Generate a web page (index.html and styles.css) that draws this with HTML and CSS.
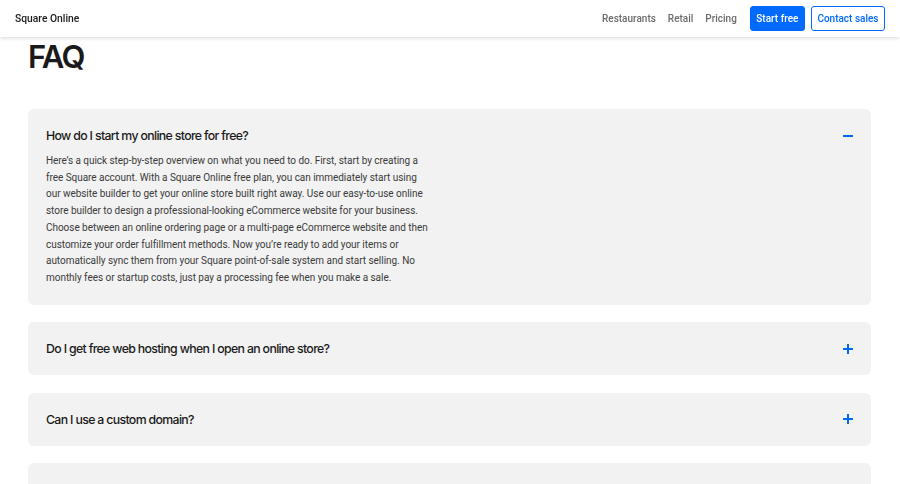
FILE: index.html
```html
<!DOCTYPE html>
<html lang="en">
<head>
<meta charset="utf-8">
<title>Square Online FAQ</title>
<link rel="stylesheet" href="styles.css">
</head>
<body>
<header class="topbar">
  <div class="brand">Square Online</div>
  <nav class="nav">
    <a class="nav-link" href="#">Restaurants</a>
    <a class="nav-link" href="#">Retail</a>
    <a class="nav-link" href="#">Pricing</a>
    <a class="btn btn-primary" href="#">Start free</a>
    <a class="btn btn-outline" href="#">Contact sales</a>
  </nav>
</header>
<main class="content">
  <h1 class="title">FAQ</h1>
  <div class="faq-list">
    <section class="faq open">
      <div class="faq-head">
        <h2 class="faq-q">How do I start my online store for free?</h2>
        <svg class="faq-icon" width="12" height="12" viewBox="0 0 12 12"><path d="M1 6h10" stroke="#006aff" stroke-width="2"/></svg>
      </div>
      <p class="faq-a">Here’s a quick step-by-step overview on what you need to do. First, start by creating a<br>free Square account. With a Square Online free plan, you can immediately start using<br>our website builder to get your online store built right away. Use our easy-to-use online<br>store builder to design a professional-looking eCommerce website for your business.<br>Choose between an online ordering page or a multi-page eCommerce website and then<br>customize your order fulfillment methods. Now you’re ready to add your items or<br>automatically sync them from your Square point-of-sale system and start selling. No<br>monthly fees or startup costs, just pay a processing fee when you make a sale.</p>
    </section>
    <section class="faq">
      <div class="faq-head">
        <h2 class="faq-q">Do I get free web hosting when I open an online store?</h2>
        <svg class="faq-icon" width="12" height="12" viewBox="0 0 12 12"><path d="M1 6h10M6 1v10" stroke="#006aff" stroke-width="2"/></svg>
      </div>
    </section>
    <section class="faq">
      <div class="faq-head">
        <h2 class="faq-q">Can I use a custom domain?</h2>
        <svg class="faq-icon" width="12" height="12" viewBox="0 0 12 12"><path d="M1 6h10M6 1v10" stroke="#006aff" stroke-width="2"/></svg>
      </div>
    </section>
    <section class="faq faded">
      <div class="faq-head">
        <h2 class="faq-q">Can I sell products online with a free online store?</h2>
        <svg class="faq-icon" width="12" height="12" viewBox="0 0 12 12"><path d="M1 6h10M6 1v10" stroke="#006aff" stroke-width="2"/></svg>
      </div>
    </section>
  </div>
</main>
</body>
</html>
```
FILE: styles.css
```css
* { box-sizing: border-box; }
html, body { margin: 0; padding: 0; }
body {
  background: #ffffff;
  font-family: Inter, "Noto Sans", "Liberation Sans", sans-serif;
  color: #1a1a1a;
  overflow: hidden;
}
.topbar {
  position: fixed;
  top: 0; left: 0; right: 0;
  height: 37px;
  background: #fff;
  box-shadow: 0 1px 4px rgba(0,0,0,0.16);
  display: flex;
  align-items: center;
  justify-content: space-between;
  padding: 0 15px 0 15px;
  z-index: 10;
}
.brand {
  font-family: Roboto, "Liberation Sans", sans-serif;
  font-size: 10.3px;
  font-weight: 500;
  color: #1a1a1a;
}
.nav {
  display: flex;
  align-items: center;
  font-family: Roboto, "Liberation Sans", sans-serif;
}
.nav-link {
  font-size: 10px;
  font-weight: 500;
  color: #6b6b6b;
  text-decoration: none;
  margin-right: 12px;
}
.btn {
  font-size: 10px;
  font-weight: 500;
  text-decoration: none;
  height: 25px;
  line-height: 23px;
  padding: 0 5.5px;
  border-radius: 3px;
  border: 1px solid #006aff;
}
.btn-primary {
  background: #006aff;
  color: #fff;
  margin-left: 1px;
  margin-right: 6px;
}
.btn-outline {
  background: #fff;
  color: #006aff;
}
.content {
  padding: 37px 29px 0 28px;
}
.title {
  margin: 0;
  font-size: 31px;
  font-weight: 600;
  letter-spacing: -1.6px;
  line-height: 40px;
  color: #1a1a1a;
}
.faq-list {
  margin-top: 32px;
  display: flex;
  flex-direction: column;
  gap: 17.5px;
}
.faq {
  background: #f2f2f2;
  border-radius: 6px;
  padding: 18px 17px 18px 18px;
}
.faq-head {
  display: flex;
  align-items: center;
  justify-content: space-between;
  height: 17px;
}
.faq-q {
  margin: 0;
  font-size: 12.3px;
  font-weight: 500;
  letter-spacing: -0.65px;
  color: #1a1a1a;
}
.faq-icon { display: block; }
.faq-a {
  margin: 9px 0 0 0;
  max-width: 430px;
  font-family: Roboto, "Liberation Sans", sans-serif;
  font-size: 10px;
  letter-spacing: -0.04px;
  line-height: 16.7px;
  color: #3a3a3a;
}
.faded .faq-q { color: #e8e8e8; }
.faded .faq-icon { opacity: 0.1; }
```
